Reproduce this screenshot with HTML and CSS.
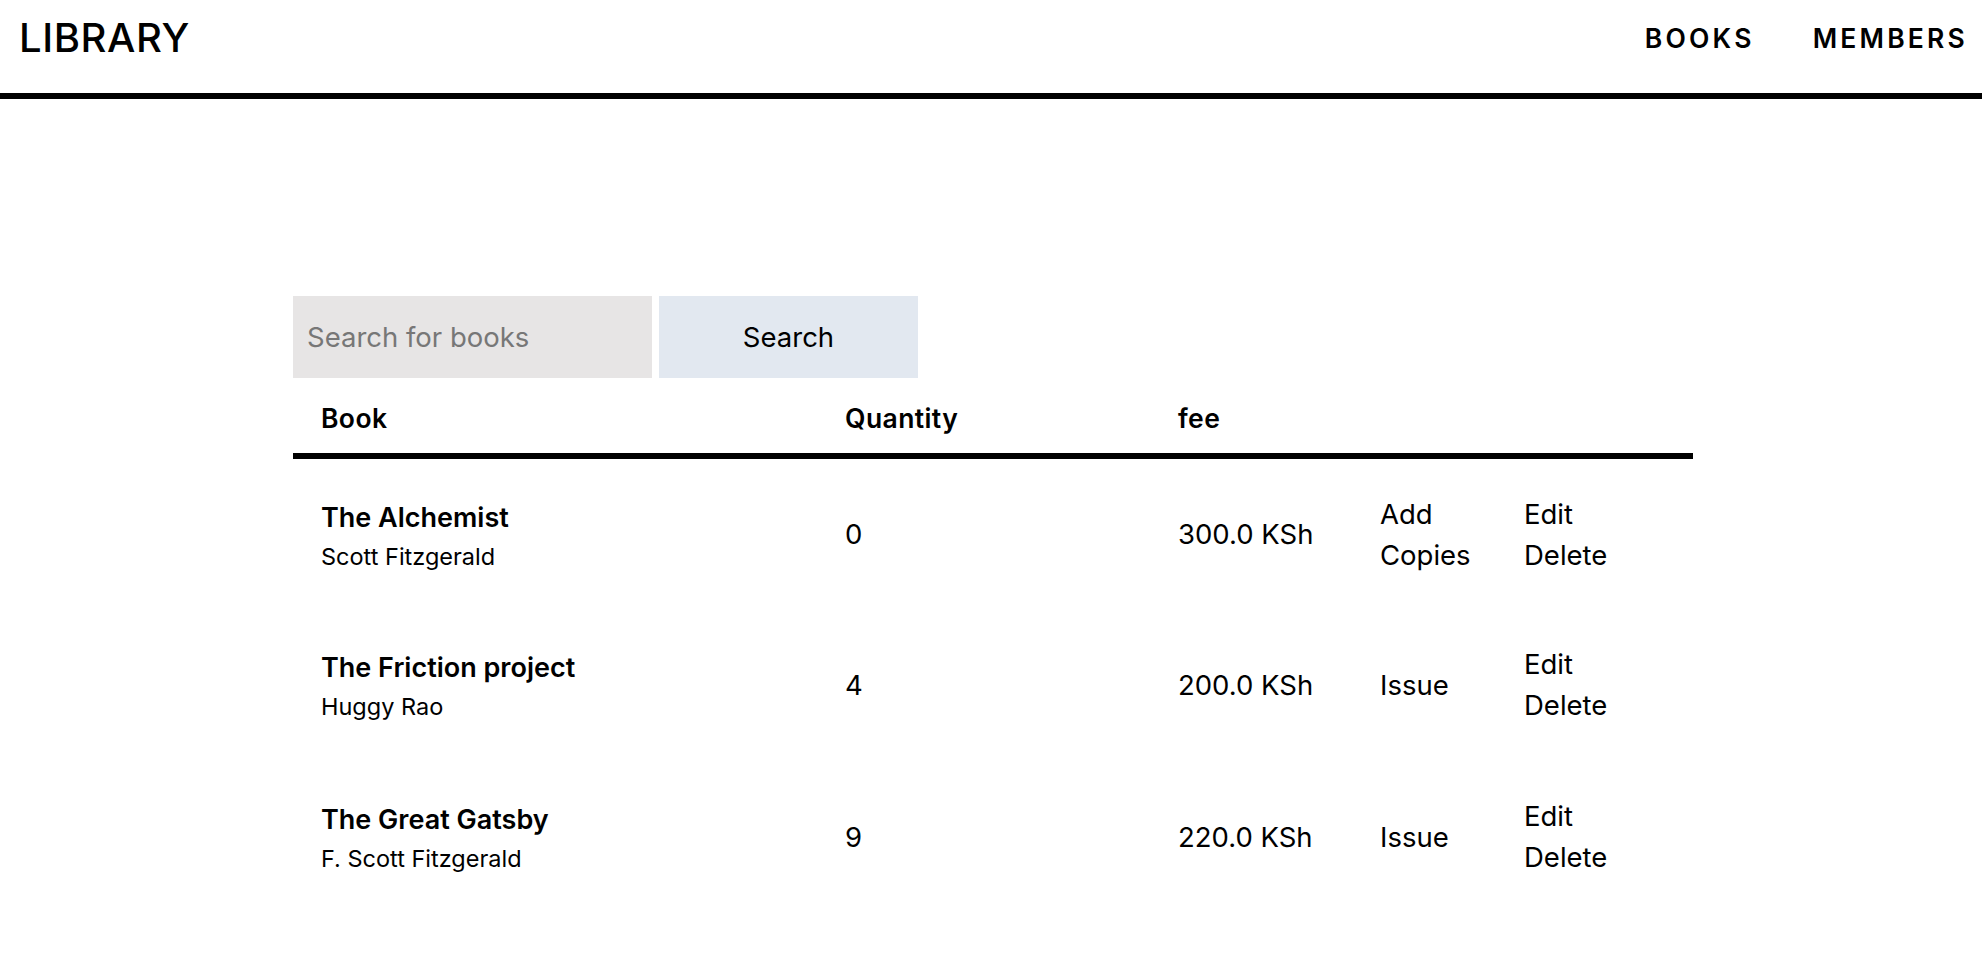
FILE: index.html
```html
<!DOCTYPE html>
<html lang="en">
<head>
<meta charset="utf-8">
<title>Library</title>
<link rel="stylesheet" href="styles.css">
</head>
<body>
<header class="topbar">
  <div class="logo">LIBRARY</div>
  <nav class="nav">
    <a class="nav-link" href="#">BOOKS</a>
    <a class="nav-link" href="#">MEMBERS</a>
  </nav>
</header>
<main class="content">
  <form class="search">
    <input class="search-input" type="text" placeholder="Search for books">
    <button class="search-btn" type="button">Search</button>
  </form>
  <table class="books">
    <thead>
      <tr>
        <th class="col-book">Book</th>
        <th class="col-qty">Quantity</th>
        <th class="col-fee">fee</th>
        <th class="col-act"></th>
        <th class="col-act2"></th>
      </tr>
    </thead>
    <tbody>
      <tr>
        <td class="book-cell"><div class="title">The Alchemist</div><div class="author">Scott Fitzgerald</div></td>
        <td>0</td>
        <td>300.0 KSh</td>
        <td><a class="act" href="#">Add Copies</a></td>
        <td><a class="act" href="#">Edit</a><br><a class="act" href="#">Delete</a></td>
      </tr>
      <tr>
        <td class="book-cell"><div class="title">The Friction project</div><div class="author">Huggy Rao</div></td>
        <td>4</td>
        <td>200.0 KSh</td>
        <td><a class="act" href="#">Issue</a></td>
        <td><a class="act" href="#">Edit</a><br><a class="act" href="#">Delete</a></td>
      </tr>
      <tr>
        <td class="book-cell"><div class="title">The Great Gatsby</div><div class="author">F. Scott Fitzgerald</div></td>
        <td>9</td>
        <td>220.0 KSh</td>
        <td><a class="act" href="#">Issue</a></td>
        <td><a class="act" href="#">Edit</a><br><a class="act" href="#">Delete</a></td>
      </tr>
    </tbody>
  </table>
</main>
</body>
</html>
```
FILE: styles.css
```css
* { box-sizing: border-box; }
html, body { margin: 0; padding: 0; background: #fff; }
body {
  font-family: Inter, "Noto Sans", "Liberation Sans", sans-serif;
  color: #000;
}
.topbar {
  display: flex;
  justify-content: space-between;
  align-items: center;
  height: 99px;
  padding: 0 14px 18px 19px;
  border-bottom: 6px solid #000;
}
.logo {
  font-size: 40px;
  font-weight: 500;
  letter-spacing: 0.6px;
}
.nav {
  display: flex;
  gap: 58px;
}
.nav-link {
  color: #000;
  text-decoration: none;
  font-size: 26.5px;
  font-weight: 600;
  letter-spacing: 3.2px;
}
.content {
  width: 1400px;
  margin: 197px 0 0 calc(50% - 698px);
}
.search {
  display: flex;
  gap: 7px;
  height: 82px;
  margin: 0;
}
.search-input {
  width: 359px;
  height: 82px;
  border: none;
  outline: none;
  background: #e7e5e5;
  padding: 0 14px;
  font-family: inherit;
  font-size: 27.5px;
  color: #000;
}
.search-input::placeholder { color: #777; }
.search-btn {
  width: 259px;
  height: 82px;
  border: none;
  background: #e2e8f0;
  font-family: inherit;
  font-size: 27.5px;
  color: #000;
}
.books {
  width: 100%;
  border-collapse: collapse;
  table-layout: fixed;
}
.books th {
  text-align: left;
  font-weight: 600;
  font-size: 26.5px;
  letter-spacing: 0.4px;
  height: 78px;
  padding: 4px 28px 0;
  border-bottom: 6px solid #000;
}
.col-book { width: 524px; }
.col-qty { width: 333px; }
.col-fee { width: 202px; }
.col-act { width: 144px; }
.col-act2 { width: 197px; }
.books td {
  height: 152px;
  padding: 2px 28px 0;
  font-size: 27.5px;
  line-height: 41px;
  vertical-align: middle;
}
.books td.book-cell { padding-top: 6px; }
.books td:nth-child(4), .books td:nth-child(5) { padding-right: 10px; }
.title {
  font-weight: 600;
  font-size: 27px;
  line-height: 39px;
}
.author {
  font-size: 23.5px;
  line-height: 39px;
}
.act {
  color: #000;
  text-decoration: none;
}
```
